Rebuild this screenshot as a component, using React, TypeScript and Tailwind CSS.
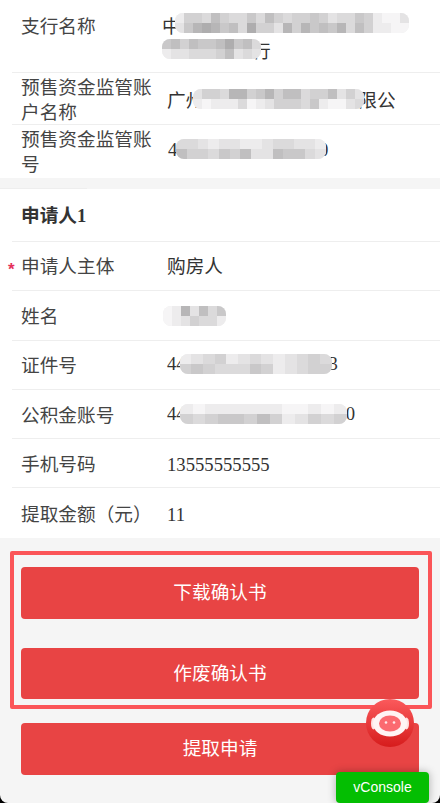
const cjk = "font-['Noto_Sans_CJK_SC','Liberation_Sans',sans-serif]";
const serif = "font-['Liberation_Serif','Noto_Sans_CJK_SC',serif]";

// one digit per blurred cell: 0 is darkest, 9 is almost white
function Mosaic({ rows, cell = 9, className = "" }: { rows: string[]; cell?: number; className?: string }) {
  return (
    <span className={`relative z-10 inline-flex shrink-0 flex-col overflow-hidden rounded-lg bg-[#eeeeee] align-middle ${className}`}>
      {rows.map((row, i) => (
        <span key={i} className="flex">
          {row.split("").map((d, j) => {
            const g = 165 + Number(d) * 9;
            return <span key={j} style={{ width: cell, height: 10, background: `rgb(${g},${g - 1},${g})` }} />;
          })}
        </span>
      ))}
    </span>
  );
}

function Row({ label, h, required, border = true, children }: { label: string; h: string; required?: boolean; border?: boolean; children: React.ReactNode }) {
  return (
    <div className={`relative ml-3 flex pl-[9px] ${border ? "border-b border-[#eeeeee]" : ""} ${h}`}>
      {required && <span className="absolute left-[-4px] top-[15px] font-['Liberation_Sans',sans-serif] text-[17px] font-bold leading-[25px] text-[#e5305a]">*</span>}
      <div className="w-[131px] shrink-0 text-[18.67px] leading-[25px] text-[#444444]">{label}</div>
      <div className="ml-[15px] min-w-0 flex-1 text-[18.67px] leading-[25px] text-[#333333]">{children}</div>
    </div>
  );
}

function RedButton({ text, h, className = "" }: { text: string; h: string; className?: string }) {
  return (
    <button className={`flex w-[398px] items-center justify-center rounded-[4px] bg-[#e84444] pb-1 text-[18.67px] text-white ${h} ${className}`}>
      {text}
    </button>
  );
}

function Robot() {
  return (
    <svg viewBox="0 0 48 48" className="absolute left-[366px] top-[699px] h-12 w-12">
      <defs>
        <linearGradient id="robot-bg" x1="0" y1="0" x2="0" y2="1">
          <stop offset="0" stopColor="#fb5a5c" />
          <stop offset="1" stopColor="#d61c1c" />
        </linearGradient>
      </defs>
      <circle cx="24" cy="24" r="24" fill="url(#robot-bg)" />
      <ellipse cx="7.5" cy="24.5" rx="2.5" ry="6" fill="#ffe3e3" />
      <ellipse cx="40.5" cy="24.5" rx="2.5" ry="6" fill="#ffe3e3" />
      <ellipse cx="24" cy="24.5" rx="17" ry="13" fill="#fff4f4" />
      <ellipse cx="24" cy="24.5" rx="11" ry="8" fill="#fb6a70" />
      <circle cx="20" cy="23.5" r="1.3" fill="#ffe9e9" />
      <circle cx="28" cy="23.5" r="1.3" fill="#ffe9e9" />
    </svg>
  );
}

export default function App() {
  return (
    <div className="h-[803px] w-[440px] overflow-hidden bg-black">
      <div className={`relative h-[803px] overflow-hidden rounded-b-lg bg-[#f5f5f5] ${cjk}`}>
        <div className="bg-white">
          <Row label="支行名称" h="h-[73px] pt-3">
            <div className="-ml-[5px]">
              <div className="flex items-center">
                <span>中</span>
                <Mosaic
                  className="-ml-[5.67px] mt-[-3px]"
                  rows={["85563566463565545766458997", "74212436155725243426358899"]}
                />
              </div>
              <div className="flex items-center">
                <Mosaic className="mt-[-2px]" rows={["43534431436", "87766653767"]} />
                <span className="-ml-[9px]">行</span>
              </div>
            </div>
          </Row>
          <Row label="预售资金监管账户名称" h="h-[52px]">
            <div className="flex h-[50px] w-[228px] items-center overflow-hidden whitespace-nowrap">
              <span>广州</span>
              <Mosaic className="-ml-[11px] mt-[1px]" rows={["7556225425336553757", "8988869875556489976"]} />
              <span className="-ml-[6px]">限公司</span>
            </div>
          </Row>
          <Row label="预售资金监管账号" h="h-[53px]" border={false}>
            <div className={`flex h-[50px] items-center pl-px ${serif}`}>
              <span className="mt-[-2px]">4</span>
              <Mosaic className="ml-[-1px] mt-[-2px]" rows={["66787788766778", "35564537734467"]} cell={10.7} />
              <span className="-ml-[7px] mt-[-2px]">0</span>
            </div>
          </Row>
        </div>

        <div className="h-[11px] bg-[#f5f5f5]" />
        <div className="-mt-px h-px w-[87px] bg-[#eeeeee]" />

        <div className="bg-white">
          <div className="ml-3 h-[53px] border-b border-[#eeeeee] pl-[9px] text-[18.67px] font-bold leading-[50px] text-[#333333]">
            申请人<span className={serif}>1</span>
          </div>
          <Row label="申请人主体" h="h-[49px] pt-[10px]" required>
            购房人
          </Row>
          <Row label="姓名" h="h-[50px] pt-[11px]">
            <div className="-ml-[4px] flex h-[25px] items-center">
              <Mosaic rows={["9827364", "9875668"]} className="mt-[3px]" />
            </div>
          </Row>
          <Row label="证件号" h="h-[49px] pt-[10px]">
            <div className={`flex h-[25px] items-center ${serif}`}>
              <span>44</span>
              <Mosaic className="-ml-[6px] mt-[1px]" rows={["8765876787656", "5456664587655"]} cell={11.7} />
              <span className="-ml-[3px]">3</span>
            </div>
          </Row>
          <Row label="公积金账号" h="h-[49px] pt-[11px]">
            <div className={`flex h-[25px] items-center ${serif}`}>
              <span>44</span>
              <Mosaic className="-ml-[6px] mt-[1px]" rows={["8988888899898", "5654453587565"]} cell={12.85} />
              <span className="ml-[-1px]">0</span>
            </div>
          </Row>
          <Row label="手机号码" h="h-[49px] pt-[11px]">
            <span className={serif}>13555555555</span>
          </Row>
          <Row label="提取金额（元）" h="h-[50px] pt-3" border={false}>
            <span className={serif}>11</span>
          </Row>
        </div>

        <div className="ml-[10px] mt-[13px] h-[158px] w-[422px] rounded-[2px] border-4 border-[#fb5558] pl-[7px] pt-3">
          <RedButton text="下载确认书" h="h-[52px]" />
          <RedButton text="作废确认书" h="h-[51px]" className="mt-[29px]" />
        </div>
        <RedButton text="提取申请" h="h-[52px]" className="ml-[21px] mt-[14px]" />

        <Robot />
        <div className="absolute left-[336px] top-[772px] flex h-[31px] w-[93px] items-center justify-center rounded-[4px] bg-[#04be02] font-['Liberation_Sans',sans-serif] text-[14px] text-white shadow-[0_0_8px_rgba(0,0,0,0.3)]">
          vConsole
        </div>
      </div>
    </div>
  );
}
